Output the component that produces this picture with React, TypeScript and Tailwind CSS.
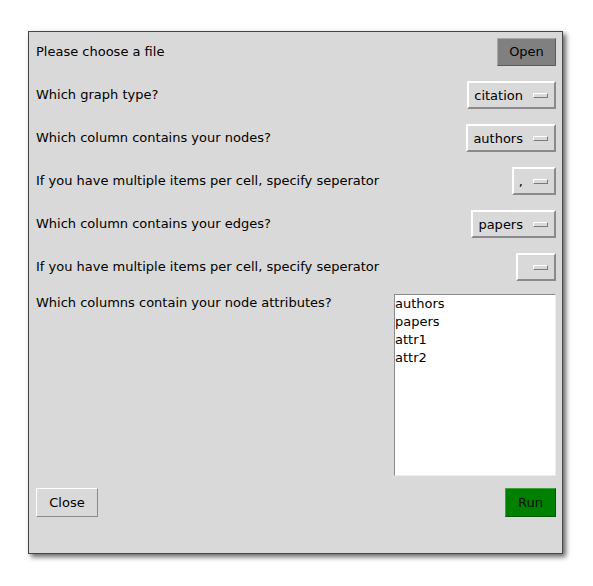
import React from 'react';

const font = { fontFamily: '"DejaVu Sans", Verdana, sans-serif' };

function OptionMenu({ value }: { value: string }) {
  return (
    <div className="h-7 flex items-center bg-[#d9d9d9] border-2 border-t-white border-l-white border-r-[#8a8a8a] border-b-[#8a8a8a] pl-[5px] pr-[6px]">
      <span className="leading-none">{value}</span>
      <span className="ml-[10px] w-[15px] h-[5px] bg-[#d9d9d9] border border-t-white border-l-white border-r-[#7a7a7a] border-b-[#7a7a7a]" />
    </div>
  );
}

function Row({ label, children }: { label: string; children: React.ReactNode }) {
  return (
    <div className="h-7 flex items-center justify-between">
      <span>{label}</span>
      {children}
    </div>
  );
}

export default function App() {
  const columns = ['authors', 'papers', 'attr1', 'attr2'];

  return (
    <div className="min-h-screen bg-white pt-[31px] pl-[28px]" style={font}>
      <div className="w-[535px] h-[523px] bg-[#d9d9d9] border border-[#454545] shadow-[3px_3px_5px_rgba(0,0,0,0.6)] flex flex-col pl-[7px] pr-[6px] pt-[6px] text-[13px] text-black">
        <div className="flex flex-col gap-[15px]">
          <Row label="Please choose a file">
            <button className="h-7 w-[59px] bg-[#808080] border border-t-[#a8a8a8] border-l-[#a8a8a8] border-r-[#5a5a5a] border-b-[#5a5a5a] text-black">
              Open
            </button>
          </Row>
          <Row label="Which graph type?">
            <OptionMenu value="citation" />
          </Row>
          <Row label="Which column contains your nodes?">
            <OptionMenu value="authors" />
          </Row>
          <Row label="If you have multiple items per cell, specify seperator">
            <OptionMenu value="," />
          </Row>
          <Row label="Which column contains your edges?">
            <OptionMenu value="papers" />
          </Row>
          <Row label="If you have multiple items per cell, specify seperator">
            <OptionMenu value="" />
          </Row>
        </div>
        <div className="flex justify-between mt-[13px]">
          <span className="leading-[18px]">Which columns contain your node attributes?</span>
          <div className="w-[162px] h-[182px] bg-white border border-t-[#8a8a8a] border-l-[#8a8a8a] border-r-[#ececec] border-b-[#ececec] leading-[18px]">
            {columns.map((c) => (
              <div key={c}>{c}</div>
            ))}
          </div>
        </div>
        <div className="flex justify-between mt-3">
          <button className="h-[29px] w-[62px] bg-[#d9d9d9] border border-t-white border-l-white border-r-[#8a8a8a] border-b-[#8a8a8a]">
            Close
          </button>
          <button className="h-[29px] w-[51px] bg-[#008000] border border-t-[#3fa03f] border-l-[#3fa03f] border-r-[#005a00] border-b-[#005a00] text-[#111]">
            Run
          </button>
        </div>
      </div>
    </div>
  );
}
